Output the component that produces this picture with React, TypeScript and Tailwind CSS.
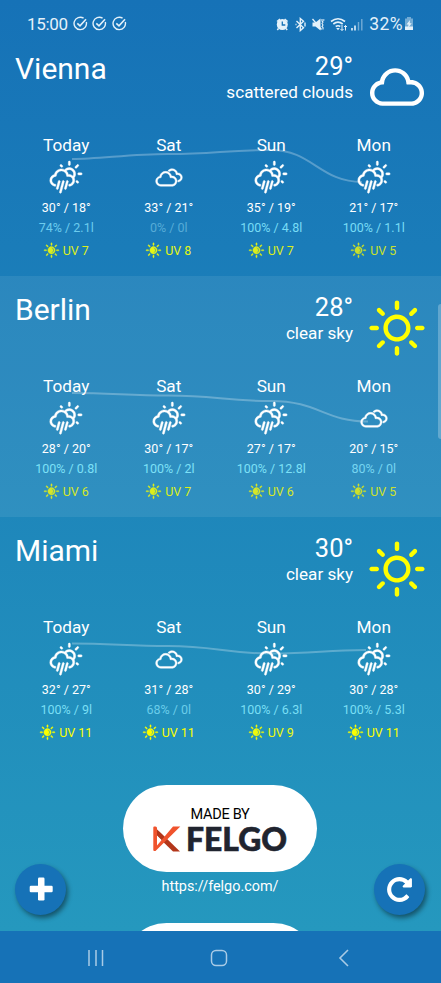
import React from "react";
import { WiCloud, WiCloudy, WiDayRain, WiDaySunny, WiSolarEclipse } from "react-icons/wi";

type Day = { name: string; icon: "rain" | "cloudy"; temp: string; rain: string; rainColor: string; uv: string; uvColor: string };
type City = { name: string; temp: string; desc: string; icon: "cloud" | "sun"; tint: string; curve: string; days: Day[] };

const cities: City[] = [
  {
    name: "Vienna", temp: "29°", desc: "scattered clouds", icon: "cloud", tint: "",
    curve: "M72 124 C100 124 130 119 168 119 C215 119 225 115 271 115 C312 115 320 147 362 147",
    days: [
      { name: "Today", icon: "rain", temp: "30° / 18°", rain: "74% / 2.1l", rainColor: "text-[#6cccee]", uv: "UV 7", uvColor: "text-[#dcee1c]" },
      { name: "Sat", icon: "cloudy", temp: "33° / 21°", rain: "0% / 0l", rainColor: "text-[#56abd7]", uv: "UV 8", uvColor: "text-[#e6f615]" },
      { name: "Sun", icon: "rain", temp: "35° / 19°", rain: "100% / 4.8l", rainColor: "text-[#78dcf6]", uv: "UV 7", uvColor: "text-[#dcee1c]" },
      { name: "Mon", icon: "rain", temp: "21° / 17°", rain: "100% / 1.1l", rainColor: "text-[#78dcf6]", uv: "UV 5", uvColor: "text-[#c8e02c]" },
    ],
  },
  {
    name: "Berlin", temp: "28°", desc: "clear sky", icon: "sun", tint: "bg-white/8",
    curve: "M72 117 C110 117 130 119.500 168 119.500 C215 119.500 225 125 271 125 C318 125 325 145.500 368 145.500",
    days: [
      { name: "Today", icon: "rain", temp: "28° / 20°", rain: "100% / 0.8l", rainColor: "text-[#7de1f7]", uv: "UV 6", uvColor: "text-[#d5e728]" },
      { name: "Sat", icon: "rain", temp: "30° / 17°", rain: "100% / 2l", rainColor: "text-[#7de1f7]", uv: "UV 7", uvColor: "text-[#dcee1c]" },
      { name: "Sun", icon: "rain", temp: "27° / 17°", rain: "100% / 12.8l", rainColor: "text-[#7de1f7]", uv: "UV 6", uvColor: "text-[#d5e728]" },
      { name: "Mon", icon: "cloudy", temp: "20° / 15°", rain: "80% / 0l", rainColor: "text-[#76d5f1]", uv: "UV 5", uvColor: "text-[#cde02c]" },
    ],
  },
  {
    name: "Miami", temp: "30°", desc: "clear sky", icon: "sun", tint: "",
    curve: "M72 126.500 C110 126.500 130 129 168 129 C215 129 225 136.500 271 136.500 C315 136.500 325 133 366 133",
    days: [
      { name: "Today", icon: "rain", temp: "32° / 27°", rain: "100% / 9l", rainColor: "text-[#7adff5]", uv: "UV 11", uvColor: "text-[#fbfe00]" },
      { name: "Sat", icon: "cloudy", temp: "31° / 28°", rain: "68% / 0l", rainColor: "text-[#6acdea]", uv: "UV 11", uvColor: "text-[#fbfe00]" },
      { name: "Sun", icon: "rain", temp: "30° / 29°", rain: "100% / 6.3l", rainColor: "text-[#7adff5]", uv: "UV 9", uvColor: "text-[#eefa0c]" },
      { name: "Mon", icon: "rain", temp: "30° / 28°", rain: "100% / 5.3l", rainColor: "text-[#7adff5]", uv: "UV 11", uvColor: "text-[#fbfe00]" },
    ],
  },
];

function CheckBadge() {
  return (
    <svg className="h-[15px] w-[15px]" viewBox="0 0 15 15" fill="none" stroke="currentColor" strokeWidth="1.4">
      <path d="M10.600 2.200A6.200 6.200 0 1 0 13.300 6" />
      <path d="M4.300 7.300l2.700 2.600L13 3.300" strokeWidth="1.6" />
    </svg>
  );
}

function StatusBar() {
  return (
    <header className="flex h-[35px] items-center pt-[12px] text-[#e4f1fa]">
      <span className="ml-[27px] w-[46px] text-[17px] leading-[22px] tracking-[-0.3px]">15:00</span>
      <div className="flex gap-[4.300px]"><CheckBadge /><CheckBadge /><CheckBadge /></div>
      <div className="ml-auto mr-[27px] flex items-center">
        <svg className="h-[16px] w-[90px]" viewBox="275 15 90 16" fill="none" stroke="currentColor">
          <circle cx="282.300" cy="23.500" r="5.500" fill="currentColor" stroke="none" />
          <path d="M277 20.500l3-2.500M287.600 20.500l-3-2.500M278.500 27.500l-1.200 1.500M286 27.500l1.200 1.500" strokeWidth="1.500" />
          <path d="M282.300 20.500v3.500h3" stroke="#1672b7" strokeWidth="1.300" />
          <path d="M296.500 20l7 6.800-3.200 2.800V17.500l3.200 2.700-7 6.800M295.500 23.500h1M305 21.500v4" strokeWidth="1.400" />
          <path d="M312.500 21.500h3l5-4v12l-5-4h-3z" fill="currentColor" stroke="none" />
          <path d="M312.500 18l9 10.500" strokeWidth="1.300" />
          <path d="M322 18v2l1 1-1 1.500 1 1.500-1 1.500 1 1v2M324.300 18.500l-1 1" strokeWidth="1.100" />
          <path d="M331 20.500q7-5.500 14 0M333.300 23q4.700-3.700 9.400 0M335.700 25.500q2.300-1.600 4.600 0" strokeWidth="1.600" />
          <path d="M338 29.200l-1.800-2.200h3.600z" fill="currentColor" stroke="none" />
          <path d="M342 24v5.500M340.500 28l1.500 1.500 1.500-1.500M345.500 29.500v-5M344 26l1.500-1.500L347 26" strokeWidth="1" />
          <path d="M352 27v2.500M355 24.500v5" strokeWidth="1.600" />
          <path d="M358.500 21v8.500M361.800 18v11.500" strokeWidth="1.400" opacity=".45" />
        </svg>
        <span className="ml-[4px] text-[17.500px] leading-[22px] tracking-[0.400px]">32%</span>
        <svg className="ml-px h-[13px] w-[10px]" viewBox="0 0 10 13">
          <path d="M3 0h4v1.500h2V13H1V1.500h2z" fill="currentColor" opacity=".45" />
          <path d="M1 9.500h8V13H1z" fill="currentColor" />
          <path d="M6 3L2.500 7.500h2L4 11l3.700-4.700h-2z" fill="currentColor" />
        </svg>
      </div>
    </header>
  );
}

function DayColumn({ day }: { day: Day }) {
  return (
    <div className="flex flex-col items-center whitespace-nowrap">
      <span className="text-[17.200px] leading-5">{day.name}</span>
      <div className="flex h-[43px] items-center pt-[2px]">
        {day.icon === "rain"
          ? <WiDayRain className="size-[36px]" stroke="currentColor" strokeWidth=".35" />
          : <WiCloudy className="size-[36px]" stroke="currentColor" strokeWidth=".35" />}
      </div>
      <span className="text-[12.500px] leading-5">{day.temp}</span>
      <span className={`text-[12.500px] leading-5 ${day.rainColor}`}>{day.rain}</span>
      <span className={`mt-[2px] flex items-center text-[12.500px] leading-5 ${day.uvColor}`}>
        <WiSolarEclipse className="mr-px -ml-[3px] size-[21px]" stroke="currentColor" strokeWidth=".6" />{day.uv}
      </span>
    </div>
  );
}

function CityCard({ city }: { city: City }) {
  return (
    <section className={`relative h-[241px] text-white ${city.tint}`}>
      <svg className="absolute inset-0 h-[241px] w-[441px]" viewBox="0 0 441 241" fill="none">
        <path d={city.curve} stroke="#fff" strokeOpacity=".27" strokeWidth="2" />
      </svg>
      <div className="flex h-[100px] items-start">
        <h2 className="ml-[15px] mt-[16px] text-[30px] leading-9">{city.name}</h2>
        <div className="ml-auto flex flex-col items-end">
          <span className="mt-[16px] text-[25.500px] leading-[30px]">{city.temp}</span>
          <span className="mt-px text-[17.100px] leading-5">{city.desc}</span>
        </div>
        <div className="ml-[5px] mr-[5px] mt-[14px]">
          {city.icon === "cloud" ? <WiCloud className="size-[78px]" /> : <WiDaySunny className="size-[78px] text-[#ffff00]" />}
        </div>
      </div>
      <div className="grid grid-cols-4 pl-[15px] pr-[16px]">
        {city.days.map((day) => <DayColumn key={day.name} day={day} />)}
      </div>
    </section>
  );
}

function FelgoLogo() {
  return (
    <svg className="h-[28px] w-[136px] overflow-visible" viewBox="0 0 136 28">
      <path d="M3 2.500L10 9l18 17.500h-7L3 9z" fill="#b3361a" />
      <path d="M4.500 10v10l5-5z" fill="#fff" />
      <path d="M1.300 2.500q0-1 1-1h1.200q1.500 0 1.500 1.500V20.500L21 1.500h7.300L3.500 26H2.300q-1 0-1-1z" fill="#f0532d" />
      <text x="34" y="25.500" textLength="101" lengthAdjust="spacingAndGlyphs" fill="#20242f" stroke="#20242f" strokeWidth=".6" className="font-['Lato'] text-[32.500px] font-black">FELGO</text>
    </svg>
  );
}

export default function App() {
  return (
    <div className="relative flex h-[983px] w-[441px] flex-col overflow-hidden bg-[#1672b7] font-['Roboto',sans-serif]">
      <main className="h-[931px] overflow-hidden bg-linear-to-b/srgb from-[#1672b7] to-[#2598be]">
        <StatusBar />
        {cities.map((city) => <CityCard key={city.name} city={city} />)}
        <div className="flex flex-col items-center pr-px pt-[27px]">
          <div className="flex h-[87px] w-[194px] flex-col items-center rounded-full bg-white pt-[20px]">
            <span className="text-[14.500px] leading-5 tracking-[-0.300px] text-black">MADE BY</span>
            <FelgoLogo />
          </div>
          <span className="mt-[5px] text-[14.400px] leading-5 text-white">https://felgo.com/</span>
          <div className="mt-[26px] h-[87px] w-[194px] shrink-0 rounded-full bg-white" />
        </div>
      </main>
      <nav className="flex h-[52px] items-center pt-[2px] text-[#a9cbe6]">
        <svg className="ml-[87px] h-5 w-[18px]" viewBox="0 0 18 20" stroke="currentColor" strokeWidth="1.500"><path d="M2 2v16M9 2v16M15.500 2v16" /></svg>
        <svg className="ml-[105px] h-5 w-[18px]" viewBox="0 0 18 20" fill="none" stroke="currentColor" strokeWidth="1.500"><rect x="1.500" y="2.500" width="15" height="15" rx="4.500" /></svg>
        <svg className="ml-[110px] h-5 w-3" viewBox="0 0 12 20" fill="none" stroke="currentColor" strokeWidth="1.600"><path d="M10 2L2 10l8 8" /></svg>
      </nav>
      <div className="absolute right-0 top-[304px] h-[135px] w-[3px] rounded-l bg-white/25" />
      <button className="absolute left-[15px] top-[864px] flex size-[51px] items-center justify-center rounded-full bg-[#1672b7] pb-px text-white shadow-[2px_3px_5px_rgba(0,0,0,0.45)]">
        <svg className="size-6" viewBox="0 0 24 24" fill="currentColor"><rect x="9" y=".5" width="6.500" height="23" rx="1.200" /><rect x=".7" y="8.800" width="23" height="6.500" rx="1.200" /></svg>
      </button>
      <button className="absolute left-[374px] top-[864px] flex size-[51px] items-center justify-center rounded-full bg-[#1672b7] text-white shadow-[2px_3px_5px_rgba(0,0,0,0.45)]">
        <svg className="size-[29px]" viewBox="0 0 1792 1792" fill="currentColor"><path d="M1664 256v448q0 26-19 45t-45 19h-448q-42 0-59-40-17-39 14-69l138-138q-148-137-349-137-104 0-198.500 40.500t-163.500 109.500-109.500 163.500-40.500 198.500 40.500 198.500 109.500 163.500 163.500 109.500 198.500 40.500q119 0 225-52t179-147q7-10 23-12 15 0 25 9l137 138q9 8 9.500 20.500t-7.500 22.500q-109 132-264 204.500t-327 72.500q-156 0-298-61t-245-164-164-245-61-298 61-298 164-245 245-164 298-61q147 0 284.500 55.500t244.500 156.500l130-129q29-31 70-14 39 17 39 59z" /></svg>
      </button>
    </div>
  );
}
